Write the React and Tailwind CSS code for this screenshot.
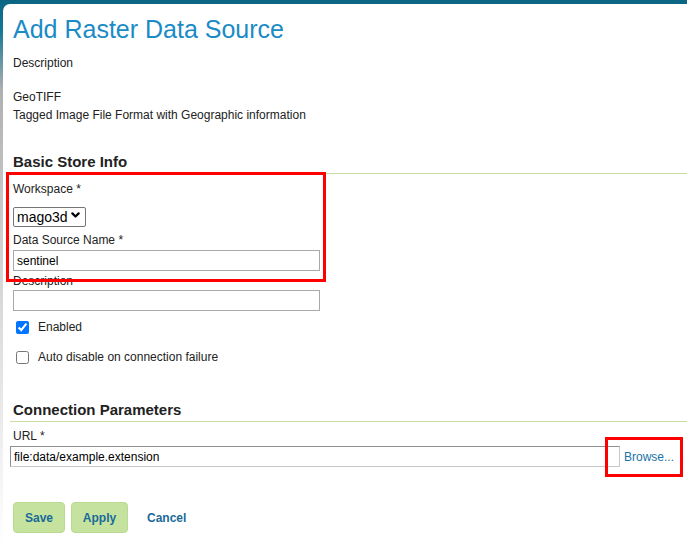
import { useState } from 'react';

const font = { fontFamily: '"Liberation Sans", Arial, sans-serif' };

const Chevron = (props) => (
  <svg viewBox="0 0 10 6" fill="none" stroke="currentColor" strokeWidth={2.4} {...props}>
    <path d="M1.5 1.2l3.5 3.5 3.5-3.5" strokeLinecap="round" strokeLinejoin="round" />
  </svg>
);

export default function App() {
  const [workspace, setWorkspace] = useState('mago3d');
  const [name, setName] = useState('sentinel');
  const [desc, setDesc] = useState('');
  const [enabled, setEnabled] = useState(true);
  const [autoDisable, setAutoDisable] = useState(false);
  const [url, setUrl] = useState('file:data/example.extension');

  return (
    <div
      className="relative w-[687px] h-[547px] overflow-hidden pt-[4px] pl-[3px] bg-[linear-gradient(to_bottom,#0b6582_0px,#137796_30px,#b0b0b0_90px,#d2d2d2_260px,#ffffff_547px)] text-[#222]"
      style={font}
    >
      <div className="h-full bg-white rounded-tl-[7px] pl-[10px]">
        <h1 className="pt-[10px] text-[25px] leading-[30px] text-[#1b8bc6]">Add Raster Data Source</h1>

        <p className="mt-[11px] text-[12px] leading-[16px]">Description</p>

        <div className="mt-[17px] text-[12px] leading-[18px]">
          <p>GeoTIFF</p>
          <p>Tagged Image File Format with Geographic information</p>
        </div>

        {/* Basic Store Info */}
        <h2 className="mt-[29px] -ml-[3px] pl-[3px] pb-[2px] border-b border-[#c9dca6] text-[15px] leading-[18px] font-bold text-[#222]">
          Basic Store Info
        </h2>

        <label className="block mt-[7px] text-[12px] leading-[16px]">Workspace *</label>
        <div className="relative mt-[8px] w-[73px] h-[20px]">
          <select
            value={workspace}
            onChange={(e) => setWorkspace(e.target.value)}
            className="appearance-none w-full h-full border border-[#767676] rounded-[2px] bg-white pl-[3px] text-[14px] leading-[18px] text-black outline-none"
            style={font}
          >
            <option value="mago3d">mago3d</option>
          </select>
          <Chevron className="absolute right-[6px] top-[7px] w-[9px] h-[6px] text-black pointer-events-none" />
        </div>

        <label className="block mt-[7px] text-[12px] leading-[16px]">Data Source Name *</label>
        <input
          value={name}
          onChange={(e) => setName(e.target.value)}
          className="block mt-[2px] w-[307px] h-[21px] border border-[#a9a9a9] px-[3px] text-[12px] text-black outline-none"
          style={font}
        />

        <label className="block mt-[2px] text-[12px] leading-[16px]">Description</label>
        <input
          value={desc}
          onChange={(e) => setDesc(e.target.value)}
          className="block mt-[1px] w-[307px] h-[21px] border border-[#a9a9a9] px-[3px] text-[12px] text-black outline-none"
          style={font}
        />

        <label className="mt-[8px] flex items-center h-[16px] text-[12px]">
          <input
            type="checkbox"
            checked={enabled}
            onChange={(e) => setEnabled(e.target.checked)}
            className="ml-[3px] w-[13px] h-[13px] accent-[#0075ff]"
          />
          <span className="ml-[9px]">Enabled</span>
        </label>

        <label className="mt-[14px] flex items-center h-[16px] text-[12px]">
          <input
            type="checkbox"
            checked={autoDisable}
            onChange={(e) => setAutoDisable(e.target.checked)}
            className="ml-[3px] w-[13px] h-[13px] accent-[#0075ff]"
          />
          <span className="ml-[9px]">Auto disable on connection failure</span>
        </label>

        {/* Connection Parameters */}
        <h2 className="mt-[36px] -ml-[3px] pl-[3px] pb-[2px] border-b border-[#c9dca6] text-[15px] leading-[18px] font-bold text-[#222]">
          Connection Parameters
        </h2>

        <label className="block mt-[6px] text-[12px] leading-[16px]">URL *</label>
        <div className="mt-[2px] -ml-[3px] flex items-center">
          <input
            value={url}
            onChange={(e) => setUrl(e.target.value)}
            className="block w-[610px] h-[21px] border border-[#8f8f8f] border-r-[#c8c8c8] border-b-[#c8c8c8] px-[3px] text-[12px] text-black outline-none"
            style={font}
          />
          <a href="#" className="ml-[4px] text-[12px] text-[#1a72a8]">Browse...</a>
        </div>

        <div className="mt-[35px] flex items-center">
          <button className="w-[52px] h-[31px] rounded-[4px] border border-[#b9da8f] bg-[#c6e29f] text-[12px] font-bold text-[#1a6a98]" style={font}>
            Save
          </button>
          <button className="ml-[6px] w-[57px] h-[31px] rounded-[4px] border border-[#b9da8f] bg-[#c6e29f] text-[12px] font-bold text-[#1a6a98]" style={font}>
            Apply
          </button>
          <a href="#" className="ml-[19px] text-[12px] font-bold text-[#1a6a98]">Cancel</a>
        </div>
      </div>

      {/* annotation boxes */}
      <div className="absolute left-[6px] top-[172px] w-[320px] h-[110px] border-[3px] border-[#ff0000] pointer-events-none" />
      <div className="absolute left-[605px] top-[437px] w-[78px] h-[40px] border-[3px] border-[#ff0000] pointer-events-none" />
    </div>
  );
}
